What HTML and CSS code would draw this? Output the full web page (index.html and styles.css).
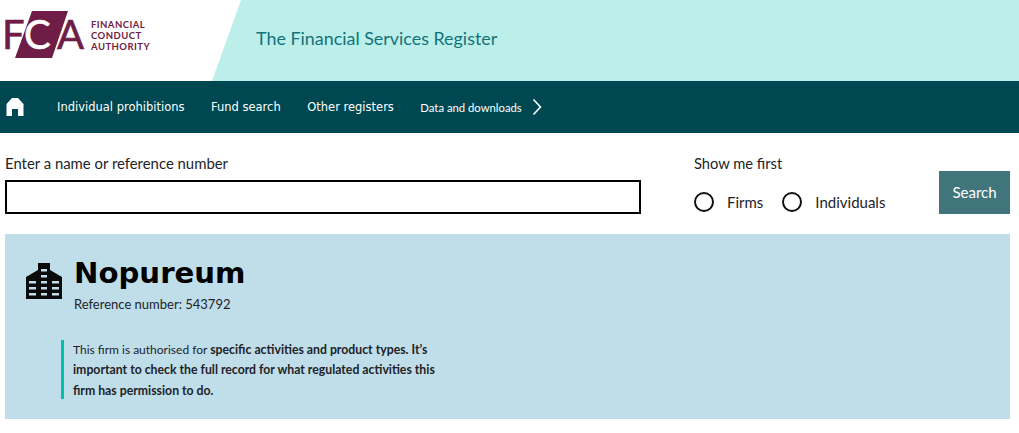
FILE: index.html
```html
<!DOCTYPE html>
<html lang="en">
<head>
  <meta charset="UTF-8" />
  <title>The Financial Services Register</title>
  <link rel="stylesheet" href="styles.css">
</head>
<body>

  <header class="top">
    <div class="brand">
      <svg class="brand-mark" width="86" height="48" viewBox="-4 0 86 48" aria-hidden="true">
        <polygon points="28,0 64,0 48,47 11,47" fill="#6f1d46"/>
        <text class="mark-f" x="-2" y="38">F</text>
        <text class="mark-c" x="20" y="38">C</text>
        <text class="mark-a" x="53" y="38">A</text>
      </svg>
      <div class="brand-name">FINANCIAL<br>CONDUCT<br>AUTHORITY</div>
    </div>
    <div class="band">The Financial Services Register</div>
  </header>

  <nav class="menu">
    <a class="home" href="#" aria-label="Home">
      <svg width="18" height="18" viewBox="0 0 18 18"><path d="M6 0 H12 L17.5 6 V18 H12 V11 H6 V18 H0.5 V6 Z" fill="#fff"/></svg>
    </a>
    <a href="#">Individual prohibitions</a>
    <a href="#">Fund search</a>
    <a href="#">Other registers</a>
    <a class="lato" href="#">Data and downloads</a>
    <svg class="chevron" width="10" height="18" viewBox="0 0 10 18"><path d="M1.5 1.5 L8.5 9 L1.5 16.5" fill="none" stroke="#fff" stroke-width="1.6"/></svg>
  </nav>

  <form class="search">
    <div class="search-field">
      <label class="search-label" for="q">Enter a name or reference number</label>
      <input class="search-input" id="q" type="text">
    </div>
    <div class="show-first">
      <div class="show-title">Show me first</div>
      <div class="radios">
        <span class="radio"></span><span class="radio-text">Firms</span>
        <span class="radio"></span><span class="radio-text">Individuals</span>
      </div>
    </div>
    <button class="search-btn" type="button">Search</button>
  </form>

  <section class="result">
    <div class="result-head">
      <svg class="firm-icon" width="36" height="36" viewBox="0 0 36 36" aria-hidden="true">
        <path fill-rule="evenodd" fill="#0b0b0b" d="M12 0 H24 V7 L36 14 V36 H0 V14 L12 7 Z
          M3 18 V20.5 H10 V18 Z M3 24 V26.5 H10 V24 Z M3 30 V32.5 H10 V30 Z
          M15 6 V8.5 H21 V6 Z M15 12 V14.5 H21 V12 Z M15 18 V20.5 H21 V18 Z M15 24 V26.5 H21 V24 Z M15 30 V32.5 H21 V30 Z
          M26 18 V20.5 H33 V18 Z M26 24 V26.5 H33 V24 Z M26 30 V32.5 H33 V30 Z"/>
      </svg>
      <div>
        <h1 class="firm-name">Nopureum</h1>
        <p class="firm-ref">Reference number: 543792</p>
      </div>
    </div>
    <p class="notice">This firm is authorised for <b>specific activities and product types. It’s important to check the full record for what regulated activities this firm has permission to do.</b></p>
  </section>

</body>
</html>
```

FILE: styles.css
```css
body {
  font-family: 'Lato', sans-serif;
  background: #fff;
  color: #1d2327;
  margin: 0;
  padding: 0;
}

/* header */
.top {
  display: flex;
  height: 81px;
}
.brand {
  width: 212px;
  display: flex;
  align-items: flex-start;
  padding: 11px 0 0 0;
  box-sizing: border-box;
}
.brand-mark {
  flex: none;
}
.brand-mark text {
  font-family: 'Lato', sans-serif;
  font-size: 40px;
  stroke-width: 0.6px;
}
.mark-f, .mark-a {
  fill: #6f1d46;
  stroke: #6f1d46;
}
.mark-c {
  fill: #fff;
  stroke: #fff;
}
.brand-name {
  margin: 8px 0 0 5px;
  color: #6f1d46;
  font-size: 9.5px;
  line-height: 11px;
  font-weight: 700;
  letter-spacing: 0.45px;
}
.band {
  flex: 1;
  background: #bcefea;
  clip-path: polygon(29px 0, 100% 0, 100% 100%, 0 100%);
  color: #13737b;
  font-size: 17.9px;
  line-height: 76px;
  padding-left: 44px;
}

/* nav */
.menu {
  display: flex;
  align-items: center;
  height: 52px;
  background: #004851;
  padding-left: 6px;
}
.menu a {
  color: #fff;
  text-decoration: none;
  font-family: 'DejaVu Sans', sans-serif;
  font-size: 11.5px;
  margin-right: 26.5px;
}
.menu a.home {
  display: flex;
  margin-right: 33px;
}
.menu a.lato {
  font-family: 'Lato', sans-serif;
  font-size: 11.3px;
  margin-right: 10px;
}

/* search */
.search {
  display: flex;
  align-items: flex-start;
  height: 101px;
  box-sizing: border-box;
  padding: 21px 9px 0 5px;
}
.search-field {
  width: 636px;
  margin-right: 53px;
}
.search-label {
  display: block;
  font-size: 14.9px;
  line-height: 18px;
  margin-bottom: 8px;
}
.search-input {
  display: block;
  width: 100%;
  height: 34px;
  box-sizing: border-box;
  border: 2px solid #000;
  padding: 0 6px;
  background: #fff;
}
.show-first {
  width: 245px;
  font-size: 14.7px;
}
.show-title {
  line-height: 18px;
}
.radios {
  display: flex;
  align-items: center;
  margin-top: 20px;
}
.radio {
  width: 16px;
  height: 16px;
  border: 2px solid #111;
  border-radius: 50%;
  margin-right: 13px;
}
.radio-text {
  font-size: 15px;
  margin-right: 19px;
}
.search-btn {
  width: 71px;
  height: 43px;
  margin-top: 17px;
  padding-bottom: 3px;
  border: 0;
  background: #41757c;
  color: #fff;
  font-family: 'Lato', sans-serif;
  font-size: 15px;
}

/* result panel */
.result {
  margin: 0 9px 0 5px;
  height: 185px;
  box-sizing: border-box;
  background: #bfdeea;
  padding: 22px 0 0 21px;
}
.result-head {
  display: flex;
  align-items: flex-start;
}
.firm-icon {
  margin: 7px 12px 0 0;
}
.firm-name {
  margin: 0;
  font-family: 'DejaVu Sans', sans-serif;
  font-size: 29.2px;
  line-height: 35px;
  font-weight: 700;
  color: #000;
}
.firm-ref {
  margin: 4px 0 0;
  font-size: 13px;
  line-height: 18px;
}
.notice {
  width: 375px;
  height: 59px;
  margin: 27px 0 0 35px;
  padding-left: 9px;
  border-left: 3px solid #00bfae;
  font-size: 12px;
  line-height: 20.3px;
}
.notice b {
  font-size: 12.27px;
}
```
